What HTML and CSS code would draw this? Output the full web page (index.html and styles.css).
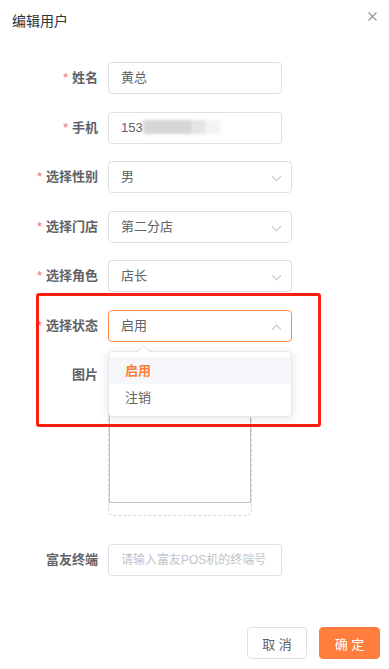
FILE: index.html
```html
<!DOCTYPE html>
<html lang="zh-CN">
<head>
  <meta charset="UTF-8">
  <title>编辑用户</title>
  <link rel="stylesheet" href="styles.css">
</head>
<body>

  <div class="dialog">
    <div class="dialog-header">
      <span class="dialog-title">编辑用户</span>
      <span class="close-btn">
        <svg width="9" height="9" viewBox="0 0 9 9"><path d="M0.5 0.5L8.5 8.5M8.5 0.5L0.5 8.5" stroke="#909399" stroke-width="1.1" fill="none"/></svg>
      </span>
    </div>

    <div class="form">
      <div class="form-row">
        <label class="required">姓名</label>
        <div class="input">黄总</div>
      </div>

      <div class="form-row">
        <label class="required">手机</label>
        <div class="input">153<span class="blur"></span></div>
      </div>

      <div class="form-row">
        <label class="required">选择性别</label>
        <div class="select">男<span class="arrow"></span></div>
      </div>

      <div class="form-row">
        <label class="required">选择门店</label>
        <div class="select">第二分店<span class="arrow"></span></div>
      </div>

      <div class="form-row">
        <label class="required">选择角色</label>
        <div class="select">店长<span class="arrow"></span></div>
      </div>

      <div class="form-row">
        <label class="required">选择状态</label>
        <div class="select is-open">启用<span class="arrow up"></span>
          <!-- 下拉 -->
          <div class="dropdown">
            <div class="dropdown-item selected">启用</div>
            <div class="dropdown-item">注销</div>
          </div>
        </div>
      </div>

      <div class="form-row upload-row">
        <label>图片</label>
        <div class="upload">
          <div class="upload-img"></div>
        </div>
      </div>

      <div class="form-row">
        <label>富友终端</label>
        <div class="input placeholder">请输入富友POS机的终端号</div>
      </div>
    </div>

    <div class="dialog-footer">
      <button class="btn">取 消</button>
      <button class="btn btn-primary">确 定</button>
    </div>

    <div class="highlight-box"></div>
  </div>

</body>
</html>
```

FILE: styles.css
```css
body {
  margin: 0;
  background: #fff;
  font-family: "Liberation Sans", "Noto Sans CJK SC", sans-serif;
  font-size: 13px;
  color: #606266;
}

.dialog {
  position: relative;
  width: 389px;
  height: 669px;
}

.dialog-header {
  display: flex;
  justify-content: space-between;
  align-items: center;
  height: 40px;
  padding: 0 12px;
}

.dialog-title {
  font-size: 14px;
  color: #303133;
}

.close-btn {
  display: flex;
  margin-top: -8px;
}

.form {
  padding-top: 22px;
}

.form-row {
  display: flex;
  margin-bottom: 17.5px;
}

.form-row label {
  width: 108px;
  flex: none;
  padding-right: 10px;
  box-sizing: border-box;
  text-align: right;
  line-height: 32px;
  font-weight: bold;
  color: #606266;
}

.required::before {
  content: "*";
  color: #f56c6c;
  margin-right: 4px;
  font-weight: normal;
}

.input, .select {
  position: relative;
  box-sizing: border-box;
  height: 32px;
  line-height: 30px;
  padding: 0 12px;
  border: 1px solid #dcdfe6;
  border-radius: 4px;
  color: #606266;
  white-space: nowrap;
}

.input { width: 174px; overflow: hidden; }
.select { width: 184px; }

.placeholder {
  color: #c0c4cc;
  font-size: 12px;
}

.blur {
  display: inline-block;
  vertical-align: middle;
  width: 80px;
  height: 14px;
  margin-top: -3px;
  background: linear-gradient(to right, #d6d6d6 0, #d6d6d6 48px, #e4e4e4 48px, #e4e4e4 62px, #f3f3f3 62px, #f3f3f3 75px, #fff 80px);
  filter: blur(1.5px);
}

.arrow {
  position: absolute;
  right: 11px;
  top: 11px;
  width: 6px;
  height: 6px;
  border-right: 1px solid #c0c4cc;
  border-bottom: 1px solid #c0c4cc;
  transform: rotate(45deg);
}

.arrow.up {
  top: 15px;
  transform: rotate(-135deg);
}

.select.is-open {
  border-color: #ff8a4c;
}

.dropdown {
  position: absolute;
  left: -1px;
  top: 40px;
  width: 184px;
  box-sizing: border-box;
  padding: 5px 0;
  background: #fff;
  border: 1px solid #e4e7ed;
  border-radius: 4px;
  box-shadow: 0 2px 12px rgba(0, 0, 0, 0.1);
  z-index: 2;
}

.dropdown::before {
  content: "";
  position: absolute;
  left: 30px;
  top: -5px;
  width: 8px;
  height: 8px;
  background: #fff;
  border-left: 1px solid #e4e7ed;
  border-top: 1px solid #e4e7ed;
  transform: rotate(45deg);
}

.dropdown-item {
  height: 27px;
  line-height: 27px;
  padding: 0 16px;
  color: #606266;
}

.dropdown-item.selected {
  background: #f5f7fa;
  color: #ff7e3e;
  font-weight: bold;
}

.upload-row {
  margin-bottom: 28px;
}

.upload {
  width: 144px;
  height: 157px;
  box-sizing: border-box;
  border: 1px dashed #d9d9d9;
  border-radius: 6px;
}

.upload-img {
  width: 142px;
  height: 143px;
  border: 1px solid #bfbfbf;
  box-sizing: border-box;
}

.dialog-footer {
  position: absolute;
  right: 9px;
  top: 627px;
  display: flex;
  gap: 12px;
}

.btn {
  width: 60px;
  height: 32px;
  font-family: inherit;
  font-size: 13px;
  border: 1px solid #dcdfe6;
  border-radius: 4px;
  background: #fff;
  color: #606266;
}

.btn-primary {
  width: 61px;
  background: #ff7e3e;
  border-color: #ff7e3e;
  color: #fff;
}

/* 标注框 */
.highlight-box {
  position: absolute;
  left: 36px;
  top: 293px;
  width: 285px;
  height: 134px;
  box-sizing: border-box;
  border: 3px solid #ff1e12;
  border-radius: 3px;
  z-index: 3;
}
```
